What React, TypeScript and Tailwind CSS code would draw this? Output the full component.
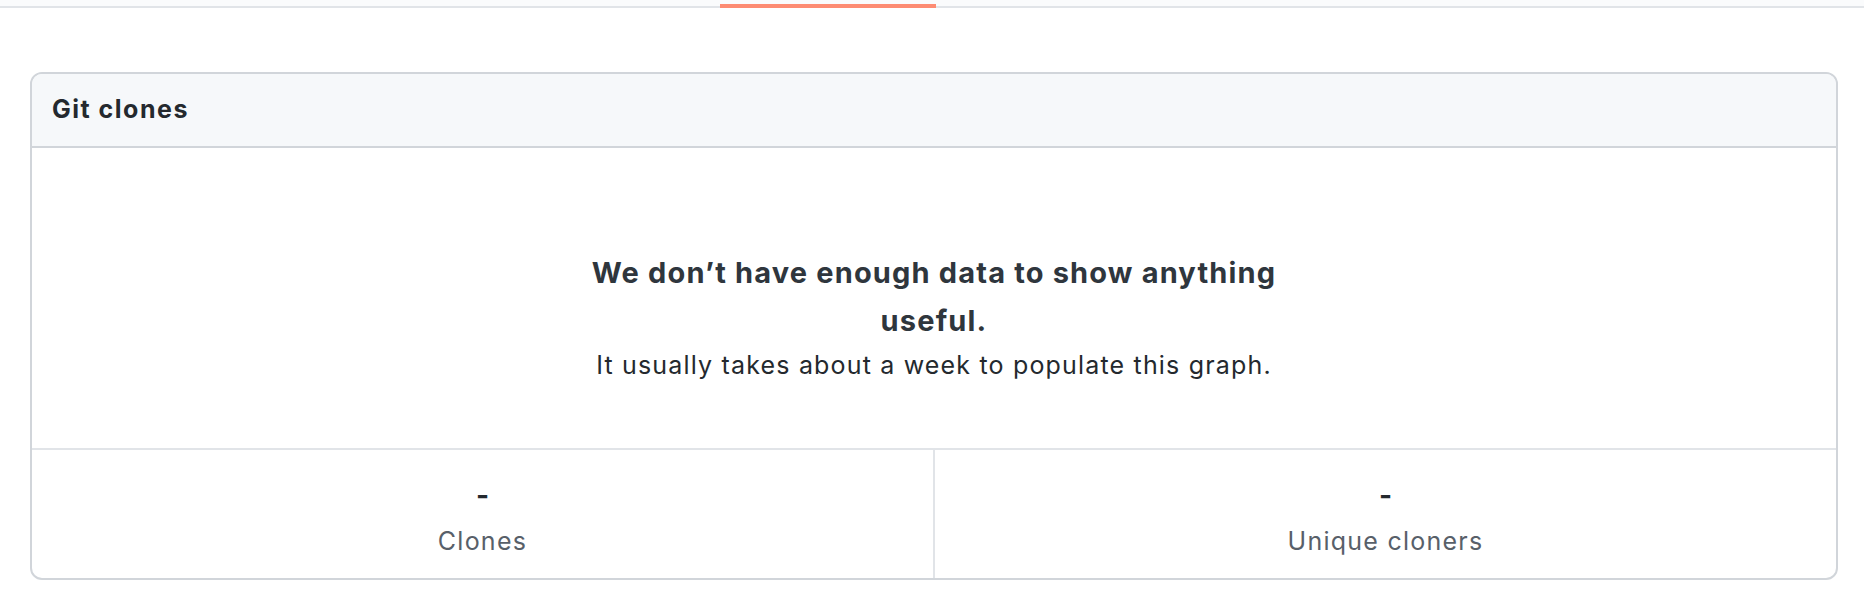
import React from "react";

const font = { fontFamily: "Inter, 'Noto Sans', sans-serif" };

function Stat({ value, label, divider }: { value: string; label: string; divider?: boolean }) {
  return (
    <div
      className={
        divider
          ? "flex-1 flex flex-col items-center pt-[25px] border-r-2 border-[#e1e4e8]"
          : "flex-1 flex flex-col items-center pt-[25px]"
      }
    >
      <span className="text-[28px] leading-[40px] font-bold text-[#24292e]">{value}</span>
      <span className="mt-[8px] text-[25px] leading-[36px] tracking-[0.05em] text-[#586069]">{label}</span>
    </div>
  );
}

export default function App() {
  return (
    <div className="w-[1864px] h-[612px] bg-white antialiased" style={font}>
      {/* tab nav strip */}
      <div className="relative h-[8px] bg-[#fafbfc] border-b-2 border-[#e1e4e8]">
        <div className="absolute left-[720px] top-[4px] w-[216px] h-[4px] bg-[#fd8c73]" />
      </div>

      <div className="pt-[64px] pl-[30px] pr-[26px]">
        <div className="border-2 border-[#d1d5da] rounded-[12px] overflow-hidden">
          <div className="h-[72px] box-content flex items-center px-[20px] bg-[#f6f8fa] border-b-2 border-[#d1d5da]">
            <h3 className="text-[25px] tracking-[0.06em] font-bold text-[#24292e]">Git clones</h3>
          </div>

          <div className="h-[300px] pt-[101px] text-center">
            <div className="max-w-[740px] mx-auto">
              <h3 className="text-[29px] leading-[48px] tracking-[0.04em] font-bold text-[#2f363d]">
                We don’t have enough data to show anything useful.
              </h3>
              <p className="mt-[2px] text-[25px] leading-[36px] tracking-[0.047em] text-[#24292e]">
                It usually takes about a week to populate this graph.
              </p>
            </div>
          </div>

          <div className="flex h-[130px] border-t-2 border-[#e1e4e8]">
            <Stat value="-" label="Clones" divider />
            <Stat value="-" label="Unique cloners" />
          </div>
        </div>
      </div>
    </div>
  );
}
